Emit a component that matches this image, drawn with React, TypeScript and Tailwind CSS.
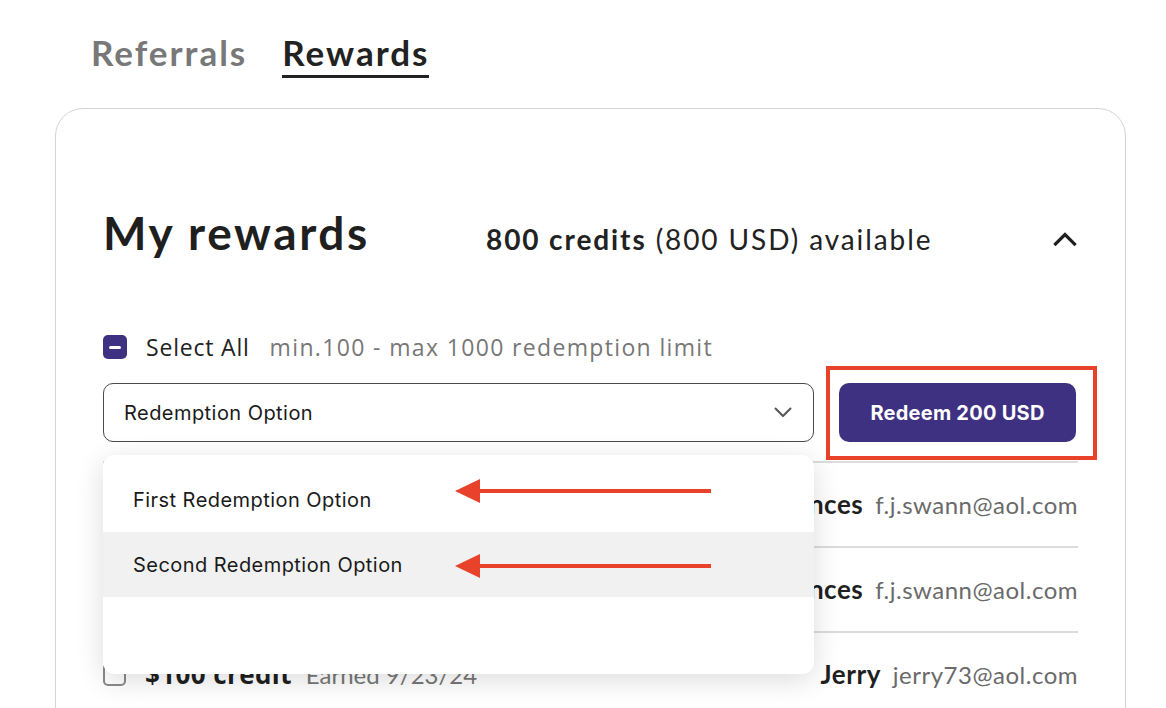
import React from "react";

const raleway = { fontFamily: "Lato, 'Open Sans', sans-serif" };

function RowCheckbox() {
  return <div className="h-[23px] w-[23px] shrink-0 rounded-[5px] border-2 border-[#8a8a8a] bg-white" />;
}

function Row({ name, email }: { name: string; email: string }) {
  return (
    <div className="flex h-[85px] items-center border-t-2 border-[#dcdcdc]">
      <RowCheckbox />
      <span className="ml-[19px] font-['Open_Sans',sans-serif] text-[26px] font-bold tracking-[0.4px] text-[#1f1f1f]">$100 credit</span>
      <span className="ml-[14px] font-['Lato',sans-serif] text-[24px] text-[#777]">Earned 9/23/24</span>
      <div className="ml-auto flex items-baseline gap-[12px]">
        <span className="font-['Lato',sans-serif] text-[26px] font-bold tracking-[0.5px] text-[#1f1f1f]">{name}</span>
        <span className="font-['Lato',sans-serif] text-[24px] tracking-[0.5px] text-[#6a6a6a]">{email}</span>
      </div>
    </div>
  );
}

export default function App() {
  return (
    <div className="min-h-[708px] w-[1166px] overflow-hidden bg-white">
      {/* Tabs */}
      <div className="flex items-start gap-[35px] pl-[91px] pt-[31px] font-['Lato',sans-serif] text-[35px] font-bold leading-[42px] tracking-[2px]">
        <span className="text-[#787878]">Referrals</span>
        <span className="border-b-[3px] border-[#222] pb-[2px] text-[#222]">Rewards</span>
      </div>

      {/* Card */}
      <div className="ml-[55px] mt-[30px] h-[640px] w-[1071px] rounded-[28px] border border-[#d4d4d4] px-[47px] pt-[96px]">
        {/* Header */}
        <div className="flex items-baseline" style={raleway}>
          <h1 className="w-[383px] shrink-0 text-[46px] font-bold leading-[55px] tracking-[2.6px] text-[#1f1f1f]">My rewards</h1>
          <div className="text-[28px] leading-[34px] tracking-[1.9px] text-[#222]">
            <span className="font-bold">800 credits</span> (800 USD) available
          </div>
          <svg className="ml-auto self-start mt-[25px]" width="26" height="17" viewBox="0 0 26 17" fill="none">
            <path d="M3.5 14 L13 4.5 L22.5 14" stroke="#1f1f1f" strokeWidth="3.2" strokeLinecap="square" />
          </svg>
        </div>

        {/* Select all */}
        <div className="mt-[71px] flex h-[32px] items-center">
          <div className="flex h-[24px] w-[24px] items-center justify-center rounded-[5px] bg-[#3f3181]">
            <div className="h-[3px] w-[12px] rounded-full bg-white" />
          </div>
          <span className="ml-[19px] font-['Open_Sans',sans-serif] text-[23px] leading-[32px] tracking-[0.8px] text-[#222]">Select All</span>
          <span className="ml-[20px] font-['Open_Sans',sans-serif] text-[23px] leading-[32px] tracking-[1.35px] text-[#777]">min.100 - max 1000 redemption limit</span>
        </div>

        {/* Select + button + list */}
        <div className="relative mt-[20px]">
          <div className="flex gap-[25px]">
            <div className="flex h-[59px] w-[711px] items-center justify-between rounded-[10px] border-[1.5px] border-[#4a4a4a] pl-[20px] pr-[21px] font-['Inter',sans-serif] text-[20px] tracking-[0.45px] text-[#1a1a1a]">
              <span>Redemption Option</span>
              <svg width="18" height="11" viewBox="0 0 18 11" fill="none">
                <path d="M1.5 1.5 L9 9 L16.5 1.5" stroke="#555" strokeWidth="2" strokeLinecap="round" strokeLinejoin="round" />
              </svg>
            </div>
            <div className="relative">
              <button className="flex h-[59px] w-[237px] items-center justify-center rounded-[10px] bg-[#3f3181] font-['Inter',sans-serif] text-[20px] font-bold tracking-[0.25px] text-white">
                Redeem 200 USD
              </button>
              <div className="pointer-events-none absolute left-[-13px] top-[-17px] h-[94px] w-[271px] border-4 border-[#e8432a]" />
            </div>
          </div>

          <div className="mt-[19px]">
            <Row name="Frances" email="f.j.swann@aol.com" />
            <Row name="Frances" email="f.j.swann@aol.com" />
            <Row name="Jerry" email="jerry73@aol.com" />
          </div>

          {/* Dropdown menu */}
          <div className="absolute left-0 top-[72px] h-[219px] w-[711px] rounded-[12px] bg-white pt-[12px] font-['Inter',sans-serif] text-[20px] tracking-[0.45px] text-[#1a1a1a] shadow-[0_6px_28px_rgba(0,0,0,0.14)]">
            <div className="flex h-[65px] items-center px-[30px]">First Redemption Option</div>
            <div className="flex h-[65px] items-center bg-[#f1f1f1] px-[30px]">Second Redemption Option</div>
            <div className="h-[65px]" />
            <svg className="pointer-events-none absolute left-0 top-0" width="711" height="219" viewBox="0 0 711 219" fill="none">
              <line x1="372" y1="36" x2="608" y2="36" stroke="#e8432a" strokeWidth="4" />
              <polygon points="352,36 377,24 377,48" fill="#e8432a" />
              <line x1="372" y1="111" x2="608" y2="111" stroke="#e8432a" strokeWidth="4" />
              <polygon points="352,111 377,99 377,123" fill="#e8432a" />
            </svg>
          </div>
        </div>
      </div>
    </div>
  );
}
